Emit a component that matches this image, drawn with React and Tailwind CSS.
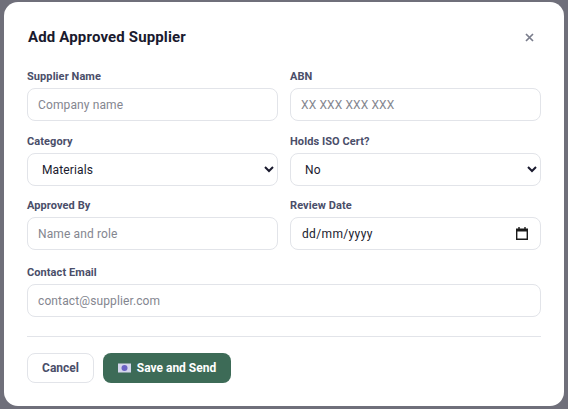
const font = { fontFamily: '"Roboto", "Liberation Sans", sans-serif' };

const inputCls =
  "w-full h-[33px] px-[10px] rounded-lg border border-[#e2e4e9] bg-white text-[12px] tracking-[0.12px] text-[#1a1a2e] placeholder:text-[#84868f] outline-none";

const Field = ({ label, children, className = "" }) => (
  <div className={`flex flex-col ${className}`}>
    <label className="text-[11px] leading-[13px] font-bold tracking-[0.08px] text-[#4a4e69] mb-[5px]">{label}</label>
    {children}
  </div>
);

const App = () => {
  return (
    <div style={font} className="w-[568px] h-[409px] bg-[#6f6f7a] overflow-hidden pt-[2px] pl-[4px]">
      <div className="w-[560px] h-[404px] bg-white rounded-[14px] px-[23px] pt-[26px]">
        <div className="flex items-center justify-between h-[18px]">
          <h2 className="text-[15px] font-bold tracking-[0.15px] pl-[1px] text-[#1a1a2e]">Add Approved Supplier</h2>
          <svg width="9" height="9" viewBox="0 0 9 9" className="mr-[7px]">
            <path d="M1 1l7 7M8 1L1 8" stroke="#7a7d8c" strokeWidth="1.7" />
          </svg>
        </div>

        <div className="grid grid-cols-2 gap-x-[12px] mt-[24px] w-[514px]">
          <Field label="Supplier Name">
            <input className={inputCls} placeholder="Company name" />
          </Field>
          <Field label="ABN">
            <input className={inputCls} placeholder="XX XXX XXX XXX" />
          </Field>
          <Field label="Category" className="mt-[14px]">
            <select className={inputCls} defaultValue="Materials">
              <option>Materials</option>
            </select>
          </Field>
          <Field label="Holds ISO Cert?" className="mt-[14px]">
            <select className={inputCls} defaultValue="No">
              <option>No</option>
            </select>
          </Field>
          <Field label="Approved By" className="mt-[13px]">
            <input className={inputCls} placeholder="Name and role" />
          </Field>
          <Field label="Review Date" className="mt-[13px]">
            <div className={`${inputCls} flex items-center justify-between pl-[11px] pr-[12px]`}>
              <span className="tracking-[0.35px]">dd/mm/yyyy</span>
              <svg width="12" height="13" viewBox="0 0 12 13">
                <path d="M0 1.5h12v3H0z" fill="#1a1a1a" />
                <path d="M.7 3h10.6v9.3H.7z" fill="none" stroke="#1a1a1a" strokeWidth="1.4" />
                <path d="M3 0v2M9 0v2" stroke="#1a1a1a" strokeWidth="1.4" />
              </svg>
            </div>
          </Field>
          <Field label="Contact Email" className="col-span-2 mt-[16px]">
            <input className={inputCls} placeholder="contact@supplier.com" />
          </Field>
        </div>

        <div className="w-[514px] border-t border-[#e2e4e9] mt-[19px]" />

        <div className="flex items-center gap-[9px] mt-[16px]">
          <button className="w-[67px] h-[30px] rounded-lg border border-[#e2e4e9] bg-white text-[12px] font-bold text-[#4a4e69]">
            Cancel
          </button>
          <button className="w-[128px] h-[30px] rounded-lg bg-[#3d6b57] flex items-center justify-center gap-[6px] text-[12px] font-bold text-white">
            <svg width="13" height="10" viewBox="0 0 13 10">
              <rect x="0" y="0.5" width="13" height="9" fill="#d5d6ec" />
              <circle cx="6.5" cy="5" r="3" fill="#6a63c4" />
            </svg>
            Save and Send
          </button>
        </div>
      </div>
    </div>
  );
};

export default App;
